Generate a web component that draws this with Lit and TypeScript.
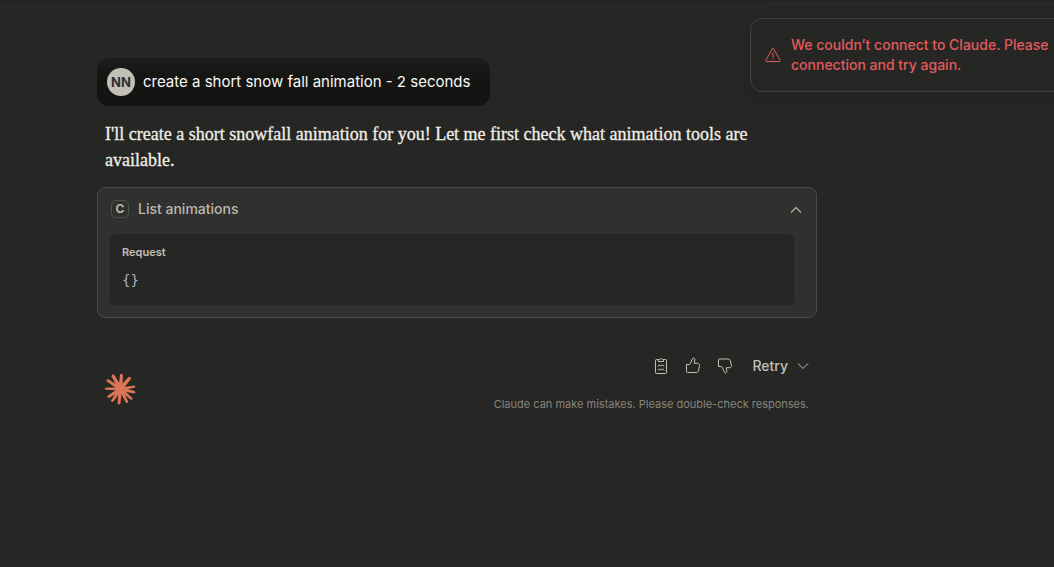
import { LitElement, html, css, svg } from "lit";
import { customElement, property } from "lit/decorators.js";

const rays: Array<[number, number, number]> = [
  [1, -15.5, 1.5], [10, -12, 1.6], [15, -2.6, 1.1], [15, 3.5, 1.3],
  [12, 10.8, 1.2], [7, 14, 1.3], [-1.7, 15.8, 1.4], [-9, 13, 1.2],
  [-13.2, 8.6, 1.4], [-16, -0.4, 1.1], [-14, -9.3, 1.4], [-8.3, -14.6, 1.6],
];

const rayPath = ([x, y, w]: [number, number, number]) => {
  const length = Math.hypot(x, y);
  const dx = (-y / length) * w;
  const dy = (x / length) * w;
  const k = 0.92;
  return `M${dx * 1.3} ${dy * 1.3}L${x * k + dx} ${y * k + dy}L${x} ${y}L${x * k - dx} ${y * k - dy}L${-dx * 1.3} ${-dy * 1.3}Z`;
};

@customElement("chat-toast")
export class ChatToast extends LitElement {
  static styles = css`
    :host {
      display: flex;
      align-items: center;
      gap: 10px;
      box-sizing: border-box;
      padding: 16px 14px;
      border: 1px solid #40403d;
      border-radius: 12px;
      background: #262624;
      box-shadow: 0 4px 16px rgba(0, 0, 0, 0.16);
      color: #e05c5c;
      font-size: 14px;
      font-weight: 500;
      line-height: 20px;
      white-space: nowrap;
    }
    .message { margin: 0; }
    svg { flex: none; }
  `;
  render() {
    return html`
      <svg width="16" height="40" viewBox="0 0 16 40" fill="none" stroke="currentColor" stroke-linejoin="round" stroke-linecap="round" aria-hidden="true">
        <path d="M7.4 13.8 .8 25.2c-.3.6 0 1.300.7 1.300h13c.7 0 1-.7.7-1.300L8.600 13.800a.7.7 0 0 0-1.200 0Z" />
        <path d="M8 18v4M8 24v.2" />
      </svg>
      <p class="message" role="alert">We couldn’t connect to Claude. Please<br />connection and try again.</p>
    `;
  }
}

@customElement("tool-call")
export class ToolCall extends LitElement {
  @property() name = "";
  @property() request = "";
  static styles = css`
    :host {
      display: block;
      border: 1px solid #4a4a47;
      border-radius: 8px;
      background: #30302e;
    }
    .header {
      display: flex;
      align-items: center;
      gap: 9px;
      width: 100%;
      height: 42px;
      padding: 0 14px 0 13px;
      border: 0;
      background: none;
      color: #bbb9ae;
      font: 500 14px/20px Inter, sans-serif;
      text-align: left;
    }
    .badge {
      box-sizing: border-box;
      width: 18px;
      height: 18px;
      border: 1px solid #4f4f4b;
      border-radius: 5px;
      font-size: 12px;
      font-weight: 700;
      line-height: 16px;
      text-align: center;
    }
    .name { flex: 1; }
    .body {
      margin: 4px 22px 12px 12px;
      padding: 10px 12px 13px;
      border-radius: 6px;
      background: #262624;
    }
    .label {
      margin: 0;
      color: #c2c0b6;
      font-size: 11px;
      font-weight: 600;
      line-height: 16px;
    }
    pre {
      margin: 8px 0 0;
      color: #abb2bf;
      font: 14px/24px "DejaVu Sans Mono", monospace;
    }
  `;
  render() {
    return html`
      <button class="header" type="button" aria-expanded="true">
        <span class="badge">C</span>
        <span class="name">${this.name}</span>
        <svg width="12" height="12" viewBox="0 0 12 12" fill="none" stroke="currentColor" stroke-width="1.200" aria-hidden="true">
          <path d="m1 9.500 5-5 5 5" />
        </svg>
      </button>
      <div class="body">
        <p class="label">Request</p>
        <pre>${this.request}</pre>
      </div>
    `;
  }
}

@customElement("app-root")
export class AppRoot extends LitElement {
  static styles = css`
    :host {
      display: block;
      position: relative;
      overflow: hidden;
      box-sizing: border-box;
      min-height: 100vh;
      padding: 57px 97px 0;
      border-top: 1px solid #20201e;
      background: #262624;
      font-family: Inter, sans-serif;
    }
    chat-toast {
      position: absolute;
      top: 17px;
      right: -64px;
      width: 368px;
    }
    main { max-width: 720px; }
    .prompt {
      display: flex;
      align-items: center;
      gap: 8px;
      box-sizing: border-box;
      width: fit-content;
      height: 48px;
      padding: 0 20px 0 10px;
      border-radius: 12px;
      background: linear-gradient(#1c1c1a, #141413 50%);
      color: #faf9f5;
      font-size: 15px;
      font-weight: 400;
      line-height: 24px;
    }
    .prompt p { margin: 0; }
    .avatar {
      width: 28px;
      height: 28px;
      border-radius: 50%;
      background: #c2c0b6;
      color: #30302e;
      font-size: 13px;
      font-weight: 700;
      line-height: 28px;
      text-align: center;
    }
    .reply {
      margin: 15px 8px 14px;
      color: #f0eee6;
      font: 18px/26px "Liberation Serif", serif;
      -webkit-text-stroke: 0.3px currentColor;
    }
    .footer {
      display: flex;
      align-items: flex-end;
      justify-content: space-between;
      padding: 35px 8px 0 7px;
    }
    .spark { padding-bottom: 8px; }
    .spark svg { display: block; }
    .side { text-align: right; }
    .actions {
      display: flex;
      align-items: center;
      justify-content: flex-end;
      gap: 16px;
    }
    button {
      display: flex;
      align-items: center;
      gap: 8px;
      padding: 0;
      border: 0;
      background: none;
      color: #c2c0b6;
      font: 500 14px/26px Inter, sans-serif;
    }
    .retry { gap: 9px; margin-left: 3px; }
    .note {
      margin: 16px 0 0;
      color: #87857c;
      font-size: 11px;
      line-height: 18px;
    }
  `;
  render() {
    return html`
      <main>
        <div class="prompt">
          <span class="avatar">NN</span>
          <p>create a short snow fall animation - 2 seconds</p>
        </div>
        <p class="reply">I'll create a short snowfall animation for you! Let me first check what animation tools are available.</p>
        <tool-call name="List animations" request="{}"></tool-call>
        <div class="footer">
          <div class="spark">
            <svg width="32" height="32" viewBox="-16.5 -16 32 32" fill="#d97757" aria-hidden="true">
              <circle r="5" />
              ${rays.map((ray) => svg`<path d=${rayPath(ray)} />`)}
            </svg>
          </div>
          <div class="side">
            <div class="actions">
              <button type="button" aria-label="Copy">
                <svg width="16" height="18" viewBox="0 0 16 18" fill="none" stroke="currentColor" stroke-linejoin="round" stroke-linecap="round">
                  <path d="M5.500 2.500h-2a1 1 0 0 0-1 1v12a1 1 0 0 0 1 1h9a1 1 0 0 0 1-1v-12a1 1 0 0 0-1-1h-2M5.500 2.500h1.200a1.400 1.400 0 0 1 2.600 0h1.200v2h-5Z" />
                  <path d="m5 9 1.500-1L8 9l1.500-1L11 9M5 13l1.500-1L8 13l1.500-1L11 13" />
                </svg>
              </button>
              <button type="button" aria-label="Good response">
                <svg width="16" height="18" viewBox="0 0 16 18" fill="none" stroke="currentColor" stroke-linejoin="round">
                  <path d="M1.500 7.500h2.700c.5 0 .8-.2 1-.6L7.500 1.800c.2-.6.6-.9 1.100-.8 1 .2 1.400 1 1.200 2L9.300 6.300h3.400c1.300 0 2.100 1.100 1.800 2.300l-1 5.200c-.3 1.100-1 1.700-2.100 1.700H2.500a1 1 0 0 1-1-1Z" />
                </svg>
              </button>
              <button type="button" aria-label="Bad response">
                <svg width="16" height="18" viewBox="0 0 16 18" fill="none" stroke="currentColor" stroke-linejoin="round">
                  <path d="M1.500 9.500h2.700c.5 0 .8.2 1 .6l2.300 5.100c.2.600.6.900 1.100.8 1-.2 1.400-1 1.200-2l-.5-3.300h3.400c1.300 0 2.100-1.100 1.800-2.300l-1.200-4.700C13 2.600 12.300 2 11.200 2H2.500a1 1 0 0 0-1 1Z" />
                </svg>
              </button>
              <button class="retry" type="button">
                Retry
                <svg width="12" height="12" viewBox="0 0 12 12" fill="none" stroke="currentColor" aria-hidden="true">
                  <path d="m1 3.500 5 5 5-5" />
                </svg>
              </button>
            </div>
            <p class="note">Claude can make mistakes. Please double-check responses.</p>
          </div>
        </div>
      </main>
      <chat-toast></chat-toast>
    `;
  }
}
